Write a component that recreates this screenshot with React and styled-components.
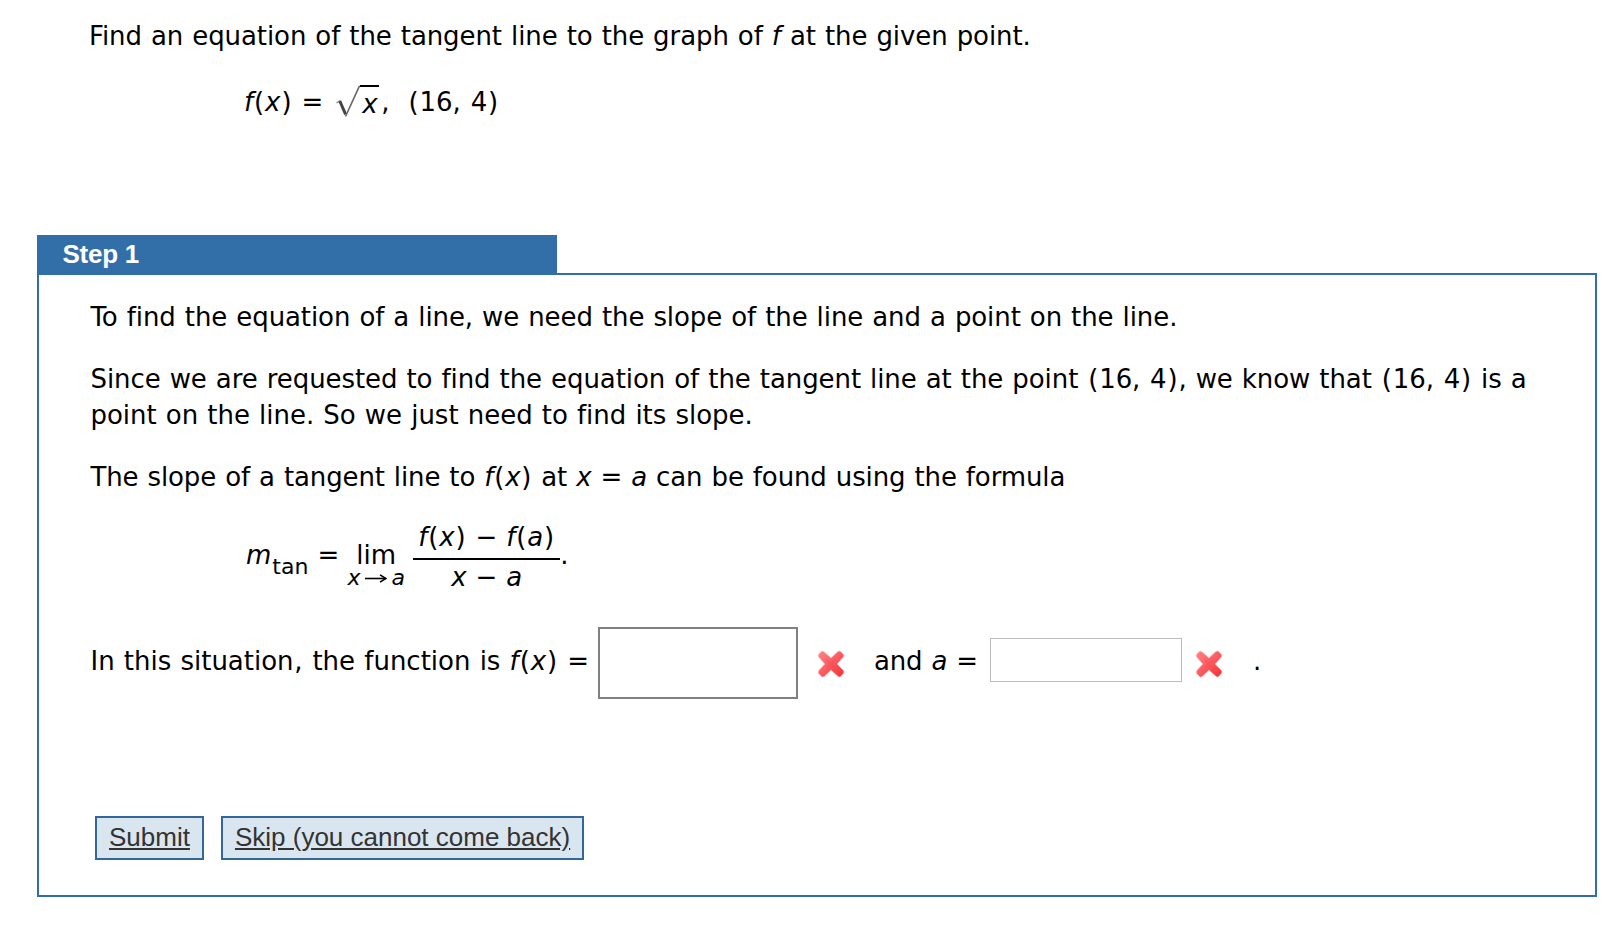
import styled, { createGlobalStyle } from "styled-components"

const blue = "#326fa9"

const Global = createGlobalStyle`
    * { box-sizing: border-box; }
    body {
        margin: 0;
        background: #fff;
        color: #000;
        font: 26px/36px Verdana, "DejaVu Sans", sans-serif;
    }
`

const Page = styled.main`
    width: 1610px;
    height: 928px;
    padding: 18px 13px 0 37px;
    overflow: hidden;
`

const Text = styled.p`
    margin: 0 0 26px;
    white-space: nowrap;
    word-spacing: 0.9px;
    letter-spacing: ${({ $track = -0.09 }) => $track}px;
`

const Line = styled.span`
    display: block;
    letter-spacing: ${({ $track }) => $track}px;
`

const Question = styled.section`
    height: 217px;
    padding-left: 52px;
`

const Equation = styled.div`
    display: flex;
    align-items: flex-start;
    margin: 30px 0 0 155px;
    white-space: pre;
`

const Part = styled.span`
    margin-left: ${({ $left = 0 }) => $left}px;
    padding-top: ${({ $top = 0 }) => $top}px;
    font-size: ${({ $size = 26 }) => $size}px;
    letter-spacing: ${({ $track = 0 }) => $track}px;
`

const Paren = styled.span`
    margin: 0 0.9px;
`

// coordinate pair, slightly looser after the comma
const Pair = styled.span`
    word-spacing: 1.6px;
`

const Comma = styled.span`
    margin: 0 0.8px 0 0.6px;
`

const Root = styled.span`
    display: flex;
    margin: 1px 0 0 13px;
    svg { display: block; }
`

const Radicand = styled.span`
    width: 19px;
    height: 32px;
    border-top: 2px solid #000;
    line-height: 34px;
    padding-left: 2px;
`

const Tab = styled.h2`
    width: 520px;
    height: 38px;
    margin: 0;
    padding-left: 25.5px;
    background: ${blue};
    color: #fff;
    font: bold 26px/38px Arial, "Liberation Sans", sans-serif;
    letter-spacing: -0.25px;
`

const Panel = styled.section`
    width: 1560px;
    height: 624px;
    padding: 24px 0 0 51.5px;
    border: 2px solid ${blue};
`

const Formula = styled.div`
    display: flex;
    align-items: flex-start;
    height: 75px;
    margin: -2px 0 33px 155.5px;
    white-space: nowrap;
`

const Limit = styled.span`
    display: flex;
    flex-direction: column;
    align-items: center;
    width: 60px;
    margin-left: 7px;
    padding-top: 21px;
    line-height: 30px;
`

const Under = styled.span`
    display: flex;
    font-size: 22px;
    line-height: 16px;
    svg {
        display: block;
        margin: 4px 4px 0 5px;
    }
`

const Fraction = styled.span`
    display: flex;
    flex-direction: column;
    width: 147px;
    margin-left: 7px;
    text-align: center;
`

const Numerator = styled.span`
    height: 41px;
    border-bottom: 2px solid #000;
    word-spacing: 0.6px;
`

const Denominator = styled.span`
    line-height: 34px;
    word-spacing: 0.6px;
`

const AnswerRow = styled.div`
    display: flex;
    height: 72px;
    margin-bottom: 117px;
    word-spacing: 0.9px;
    white-space: nowrap;
`

const MathBox = styled.div`
    width: 200px;
    height: 72px;
    margin-left: 9px;
    border: 2px solid #808080;
`

const AnswerInput = styled.input`
    width: 192px;
    height: 44px;
    margin: 11px 0 0 12px;
    border: 1px solid #bbb;
    background: #fff;
    outline: none;
`

const CrossIcon = styled.svg`
    flex: none;
    width: 28px;
    height: 28px;
    margin: 23px 0 0 ${({ $left }) => $left}px;
`

const Buttons = styled.div`
    display: flex;
    gap: 17px;
    padding-left: 4.5px;
`

const Button = styled.a`
    height: 44px;
    padding: 0 12px;
    border: 2px solid #369;
    background: #dae6ef;
    color: #333;
    font: 26px/38px Arial, "Liberation Sans", sans-serif;
    text-decoration: underline;
    white-space: nowrap;
`

const Fn = ({ of }) => (
    <><i>f</i><Paren>(</Paren><i>{of}</i><Paren>)</Paren></>
)

const Point = () => (
    <Pair><Paren>(</Paren>16, 4<Paren>)</Paren></Pair>
)

const Wrong = ({ left }) => (
    <CrossIcon $left={left} viewBox="0 0 28 28" aria-label="incorrect">
        <defs>
            <linearGradient id="wrong" x1="0" y1="0" x2="1" y2="1">
                <stop offset="0" stopColor="#ff8588" />
                <stop offset="0.5" stopColor="#fb5b60" />
                <stop offset="1" stopColor="#ee2f35" />
            </linearGradient>
        </defs>
        <path
            d="M4.6 1.3Q6 .8 7 1.8L14 8l6.8-6.4Q22.4.4 23.8 1.6l2.6 2.8Q27.4 5.6 26.4 7L20.2 14l6.2 6.4q1.2 1.4.2 2.8L23.8 26.4q-1.4 1.2-2.8 0L14 20.2 7.2 26.4q-1.4 1.2-2.8 0L1.6 23.4q-1-1.4.2-2.8L7.8 14 1.8 7.2q-1.2-1.4-.2-2.8Z"
            fill="url(#wrong)"
            stroke="#ffb9bb"
            strokeWidth="0.8"
            strokeLinejoin="round"
        />
        <path d="m10 10 8 8m0-8-8 8" stroke="#f5474c" strokeWidth="2" opacity=".35" />
    </CrossIcon>
)

const App = () => {
    return (
        <Page>
            <Global />
            <Question>
                <Text>Find an equation of the tangent line to the graph of <i>f</i> at the given point.</Text>
                <Equation>
                    <Part><Fn of="x" /></Part>
                    <Part $left={9}>=</Part>
                    <Root>
                        <svg width="24" height="32" viewBox="0 0 24 32" fill="none">
                            <path d="m.5 18 4-2.4" stroke="#888" strokeWidth="1.4" />
                            <path d="m3.8 16 5.8 13.4" stroke="#444" strokeWidth="3" />
                            <path d="M9.5 31.5 23.5.8" stroke="#666" strokeWidth="1.6" />
                        </svg>
                        <Radicand><i>x</i></Radicand>
                    </Root>
                    <Part $left={2}>,</Part>
                    <Part $left={18}><Point /></Part>
                </Equation>
            </Question>

            <Tab>Step 1</Tab>
            <Panel>
                <Text>To find the equation of a line, we need the slope of the line and a point on the line.</Text>
                <Text>
                    <Line $track={-0.08}>
                        Since we are requested to find the equation of the tangent line at the point <Point />, we know that <Point /> is a
                    </Line>
                    <Line $track={-0.02}>point on the line. So we just need to find its slope.</Line>
                </Text>
                <Text $track={-0.12}>The slope of a tangent line to <Fn of="x" /> at <i>x</i> = <i>a</i> can be found using the formula</Text>
                <Formula>
                    <Part $top={18}><i>m</i></Part>
                    <Part $top={30} $size={22} $left={1}>tan</Part>
                    <Part $top={18} $left={9}>=</Part>
                    <Limit>
                        lim
                        <Under>
                            <i>x</i>
                            <svg width="22" height="9" viewBox="0 0 22 9" fill="none" stroke="#000">
                                <path d="M0 4.5h21" strokeWidth="1.6" />
                                <path d="m15 .8 6 3.7-6 3.7" strokeWidth="1.5" />
                            </svg>
                            <i>a</i>
                        </Under>
                    </Limit>
                    <Fraction>
                        <Numerator><Fn of="x" /> − <Fn of="a" /></Numerator>
                        <Denominator><i>x</i> − <i>a</i></Denominator>
                    </Fraction>
                    <Part $top={18}>.</Part>
                </Formula>
                <AnswerRow>
                    <Part $top={16}>In this situation<Comma>,</Comma> the function is <Fn of="x" /> =</Part>
                    <MathBox />
                    <Wrong left={19} />
                    <Part $top={16} $left={29} $track={-0.15}>and <i>a</i> =</Part>
                    <AnswerInput />
                    <Wrong left={13} />
                    <Part $top={16} $left={30}>.</Part>
                </AnswerRow>
                <Buttons>
                    <Button>Submit</Button>
                    <Button>Skip (you cannot come back)</Button>
                </Buttons>
            </Panel>
        </Page>
    )
}
export default App
